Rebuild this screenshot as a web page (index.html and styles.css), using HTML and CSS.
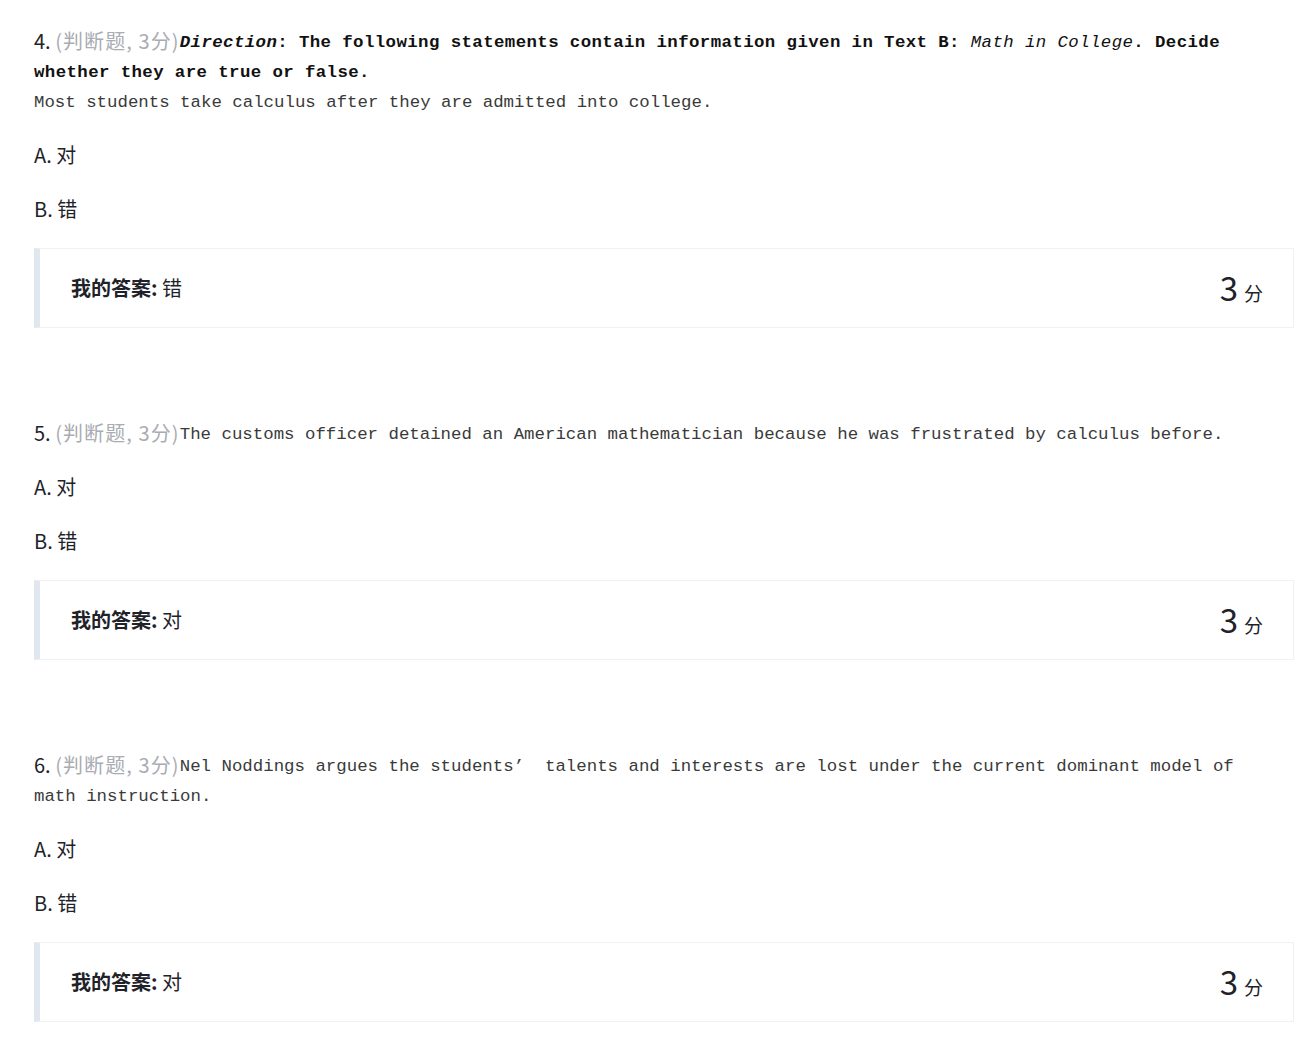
FILE: index.html
```html
<!DOCTYPE html>
<html lang="zh-CN">
<head>
<meta charset="utf-8">
<title>判断题</title>
<link rel="stylesheet" href="styles.css">
</head>
<body>
<div class="page">
  <section class="question">
    <div class="title"><span class="num">4.</span> <span class="type">(判断题, 3分)</span><span class="strong"><em>Direction</em>: The following statements contain information given in Text B: <em class="light">Math in College</em>. Decide whether they are true or false.</span><br><span class="mono">Most students take calculus after they are admitted into college.</span></div>
    <div class="option">A. 对</div>
    <div class="option">B. 错</div>
    <div class="answer">
      <div class="mine"><b>我的答案:</b> 错</div>
      <div class="score"><span class="pts">3</span> <span class="unit">分</span></div>
    </div>
  </section>
  <section class="question">
    <div class="title"><span class="num">5.</span> <span class="type">(判断题, 3分)</span><span class="mono">The customs officer detained an American mathematician because he was frustrated by calculus before.</span></div>
    <div class="option first">A. 对</div>
    <div class="option">B. 错</div>
    <div class="answer">
      <div class="mine"><b>我的答案:</b> 对</div>
      <div class="score"><span class="pts">3</span> <span class="unit">分</span></div>
    </div>
  </section>
  <section class="question">
    <div class="title"><span class="num">6.</span> <span class="type">(判断题, 3分)</span><span class="mono">Nel Noddings argues the students’&nbsp; talents and interests are lost under the current dominant model of math instruction.</span></div>
    <div class="option first">A. 对</div>
    <div class="option">B. 错</div>
    <div class="answer">
      <div class="mine"><b>我的答案:</b> 对</div>
      <div class="score"><span class="pts">3</span> <span class="unit">分</span></div>
    </div>
  </section>
</div>
</body>
</html>
```
FILE: styles.css
```css
html, body {
  margin: 0;
  padding: 0;
  background: #ffffff;
}
.page {
  padding: 26px 14px 0 34px;
  font-family: "Noto Sans CJK SC", "Noto Sans", sans-serif;
  color: #1f2329;
}
.question {
  margin-bottom: 90px;
}
.title {
  line-height: 30px;
  padding-right: 30px;
  margin-bottom: 24px;
  font-size: 20px;
}
.title span,
.title em {
  line-height: 16px;
}
.num {
  font-size: 20px;
  color: #1f2329;
}
.type {
  font-size: 20px;
  color: #a9acb2;
  letter-spacing: 1.1px;
}
.mono {
  font-family: "Liberation Mono", "DejaVu Sans Mono", monospace;
  font-size: 17.4px;
  color: #3a3a3a;
  vertical-align: 2px;
}
.strong {
  font-family: "Liberation Mono", "DejaVu Sans Mono", monospace;
  font-size: 17.4px;
  font-weight: bold;
  color: #111111;
  letter-spacing: 0.4px;
  vertical-align: 2px;
}
.strong em.light {
  font-weight: normal;
}
.option {
  font-size: 20px;
  line-height: 30px;
  margin-bottom: 24px;
  color: #1f2329;
}
.option.first {
  margin-top: 1px;
}
.answer {
  display: flex;
  justify-content: space-between;
  align-items: center;
  height: 80px;
  box-sizing: border-box;
  border: 1px solid #f0f1f3;
  border-left: 6px solid #e1e7ef;
  padding: 0 30px 0 31px;
}
.mine {
  font-size: 20px;
  line-height: 30px;
  color: #1f2329;
}
.mine b {
  font-weight: bold;
}
.score {
  display: flex;
  align-items: baseline;
  gap: 6px;
}
.pts {
  font-size: 33px;
  line-height: 1;
  color: #1f2329;
}
.unit {
  font-size: 19px;
  color: #1f2329;
}
```
